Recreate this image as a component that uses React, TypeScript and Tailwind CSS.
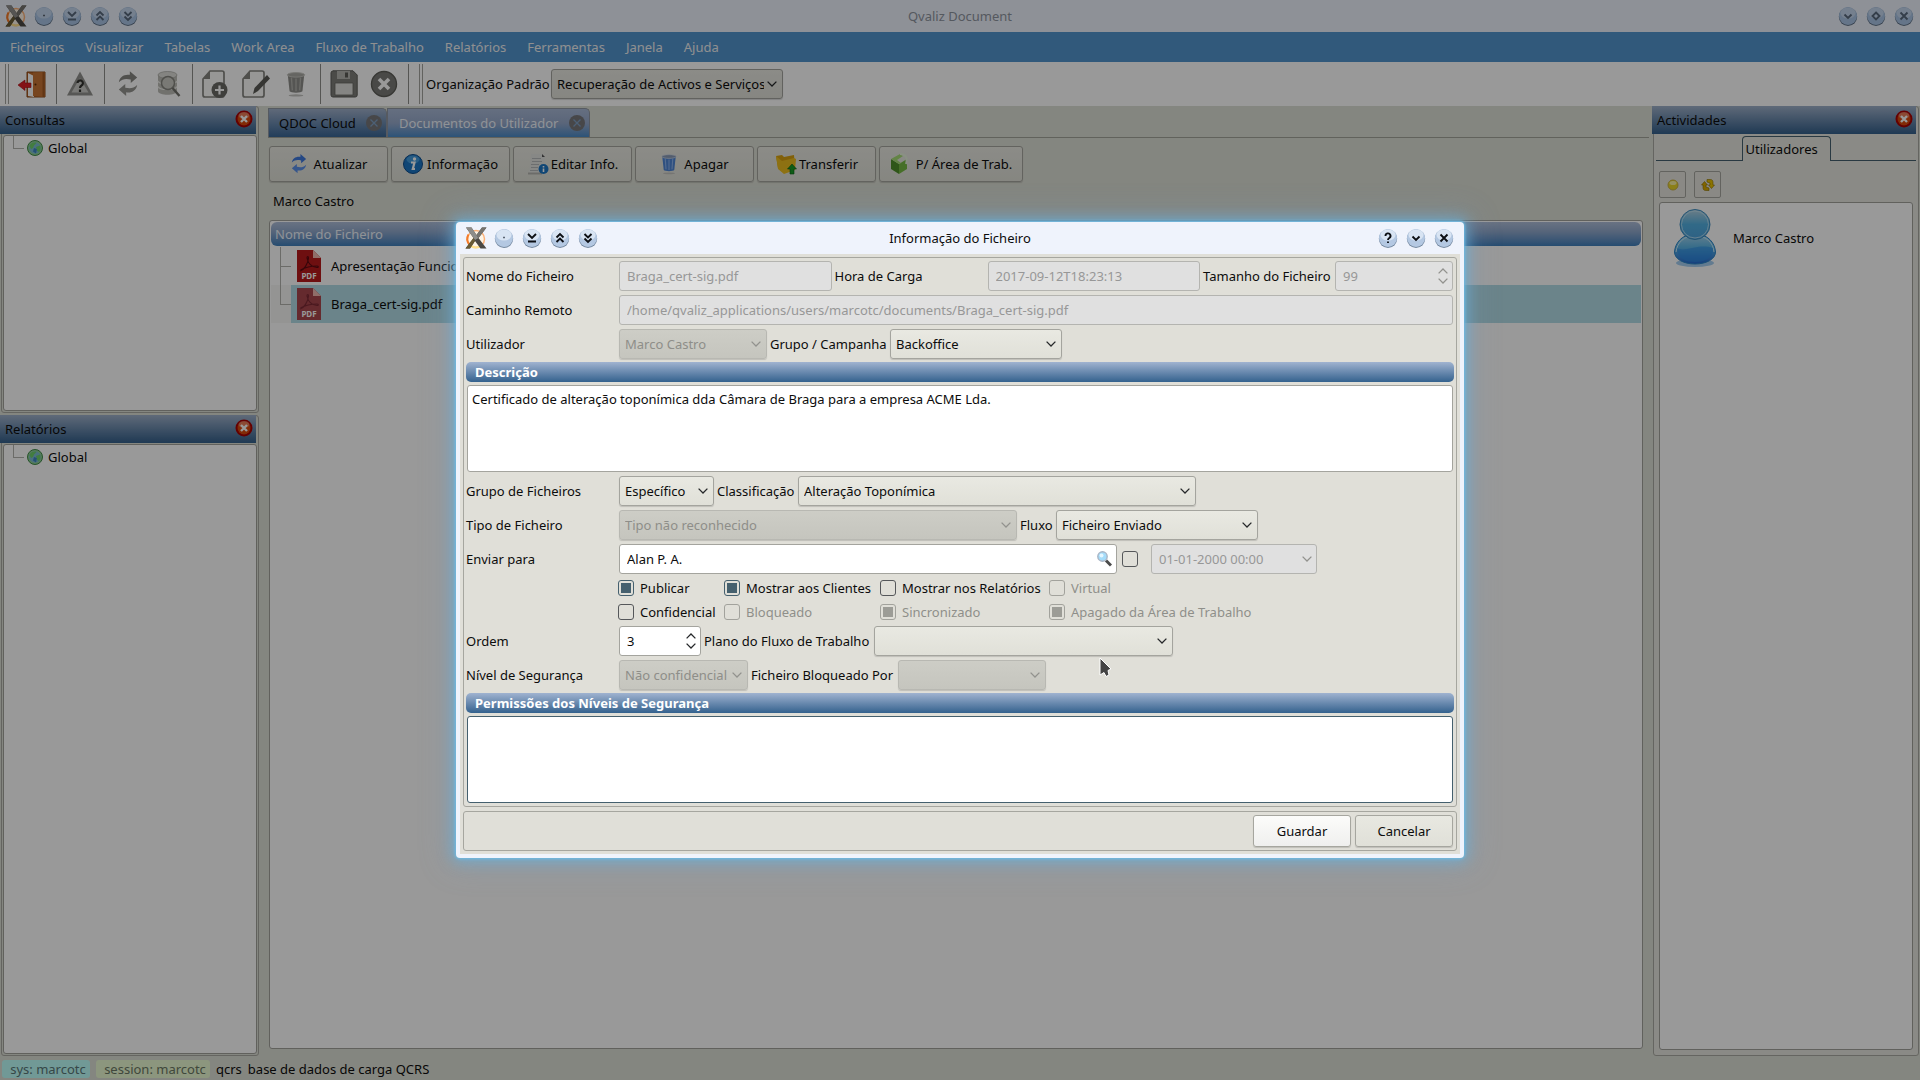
import React from 'react';
import clsx from 'clsx';

type Glyph = 'dot' | 'keepBelow' | 'up' | 'down' | 'minimize' | 'maximize' | 'close' | 'help';

const glyphPaths: Record<Glyph, string> = {
  dot: 'M9.5 9h1v1h-1z',
  keepBelow: 'M6 6l4 4 4-4M6 13.5h8',
  up: 'M6.5 9.5L10 6l3.500 3.500M6.500 14L10 10.500l3.500 3.500',
  down: 'M6.500 6L10 9.500 13.500 6M6.500 10.500L10 14l3.500-3.500',
  minimize: 'M6.500 8.500L10 12l3.500-3.500',
  maximize: 'M10 6.500L13.500 10 10 13.500 6.500 10z',
  close: 'M6.500 6.500l7 7M13.500 6.500l-7 7',
  help: 'M7.500 8a2.500 2.500 0 1 1 3.800 2c-.9.600-1.300.900-1.300 2M10 13.500v1.500',
};

/* Round window button of the title bars */
const WindowButton: React.FC<{ glyph: Glyph; label: string; dim?: boolean }> = ({ glyph, label, dim }) => (
  <button aria-label={label} className="flex size-7 items-center justify-center">
    <svg viewBox="0 0 20 20" className="size-5">
      <circle cx="10" cy="10.800" r="9.200" fill={dim ? '#5f7186' : '#74889f'} />
      <circle cx="10" cy="10" r="9" fill={dim ? '#a9c4e4' : '#b4c8e2'} />
      <ellipse cx="10" cy="7" rx="7.500" ry="5.500" fill="#e4edf8" opacity={dim ? 0.45 : 0.75} />
      <path
        d={glyphPaths[glyph]}
        fill="none"
        stroke={glyph === 'dot' ? '#5b6673' : dim ? '#58687c' : '#0c0f14'}
        strokeWidth={glyph === 'dot' ? 1 : 1.9}
      />
    </svg>
  </button>
);

const AppLogo = () => (
  <svg viewBox="0 0 24 24" className="size-6">
    <circle cx="12" cy="13" r="8.500" fill="#fdf4e6" stroke="#fbb077" strokeWidth="1.500" />
    <path d="M4.500 8.500a8.500 8.500 0 0 0 1 10" fill="none" stroke="#f47b2a" strokeWidth="2" />
    <path d="M5.500 18.500a8.500 8.500 0 0 0 12 1" fill="none" stroke="#ffe08a" strokeWidth="2" />
    <path d="M2 1.500h5.500l5 7.500L18 1.500h4.500L14.500 12l8 10.500h-6L11 15 6 22.500H1.500L9.500 12z" fill="#4b4843" />
    <path d="M2 1.500h5.500l5 7.500 2 3-3.500 2-1.500-2z" fill="#8e8d8a" />
    <path d="M18 1.500h4.500L14.500 12l-2-3z" fill="#77746e" />
    <path d="M9.500 12l-8 10.500H6L11 15z" fill="#6a5b34" />
  </svg>
);

const CloseBadge = () => (
  <svg viewBox="0 0 18 18" className="size-[18px]">
    <circle cx="9" cy="9" r="8.500" fill="#a80000" />
    <circle cx="9" cy="9" r="6.500" fill="#d8480c" />
    <ellipse cx="9" cy="5.500" rx="5.500" ry="3.500" fill="#f4a08c" opacity=".6" />
    <path d="M6 6l6 6M12 6l-6 6" stroke="#fff" strokeWidth="2.400" />
  </svg>
);

const Globe = () => (
  <svg viewBox="0 0 16 16" className="size-4">
    <circle cx="8" cy="8" r="7.500" fill="#8fd092" stroke="#3f8a4a" />
    <circle cx="8" cy="8" r="5.800" fill="#7cbcd2" />
    <path d="M2.500 6C4 2.500 8 2 9.500 3L7 5.500 6 8l-2 1zM9 7l4-1.500c1 2 .5 5-1 6.500l-2-1z" fill="#6ed069" />
    <path d="M7 8l3 1-1 4.500-3-2z" fill="#3f86c4" />
  </svg>
);

const PdfIcon: React.FC<{ selected?: boolean }> = ({ selected }) => (
  <svg viewBox="0 0 24 32" className="h-8 w-6">
    <path d="M0 0h16l8 8v24H0z" fill={selected ? '#a8464e' : '#b81a1c'} />
    <path d="M16 0l8 8h-8z" fill="#f0b8b0" />
    <path
      d="M3 21c4-1 8-7 8.500-13 0-2-1.500-2-1.500 0 1 5 4 9 10 9.500 2 0 1.500-1.500 0-1.500C14 16 8 17.500 3.500 20"
      fill="none"
      stroke={selected ? '#7c2a34' : '#5c0a10'}
      strokeWidth="1.200"
    />
    <text x="12" y="29" textAnchor="middle" fontFamily="Noto Sans, sans-serif" fontSize="8" fontWeight="700" fill="#fff">
      PDF
    </text>
  </svg>
);

const DoorIcon = () => (
  <svg viewBox="0 0 28 28" className="size-7">
    <path d="M9 2h18v25H9z" fill="#c06a28" stroke="#8a4614" />
    <path d="M10 3l6 3v21l-6-1z" fill="#fff" />
    <path d="M15 2.500l11.500-.5v25L15 26z" fill="#c77434" />
    <path d="M24.500 2h2v25h-2z" fill="#a45a22" />
    <circle cx="17.500" cy="14.500" r="1" fill="#5a2c08" />
    <path d="M0 15l7-5v3h6v4.500H7v3z" fill="#dc1f26" stroke="#a50d14" strokeWidth=".6" />
  </svg>
);

const WarningIcon = () => (
  <svg viewBox="0 0 28 28" className="size-7">
    <path d="M14 1.500L27 25.500H1z" fill="#92928e" />
    <path d="M14 8l8.500 14.500h-17z" fill="#cacac6" />
    <path d="M11.500 13a2.700 2.700 0 1 1 4 2.500c-1 .6-1.500 1-1.500 2.500M14 19.500V22" fill="none" stroke="#33332f" strokeWidth="2.200" />
  </svg>
);

const RefreshIcon: React.FC<{ blue?: boolean; className?: string }> = ({ blue, className }) => (
  <svg viewBox="0 0 24 28" className={className}>
    <path d="M2 12C3 6 8 3 14 4V0l8 7-7 6V9C10 8 6 8 2 12z" fill={blue ? '#3f78dc' : '#878783'} />
    <path d="M22 15c-1 6-6 9-12 8v4l-8-7 7-6v4c5 1 9 1 13-3z" fill={blue ? '#5b8fe8' : '#94948f'} />
  </svg>
);

const DatabaseSearchIcon = () => (
  <svg viewBox="0 0 28 28" className="size-7">
    <path d="M4 5v16c0 5 19 5 19 0V5z" fill="#bcbcb6" />
    <ellipse cx="13.500" cy="5" rx="9.500" ry="3.500" fill="#dcdcd7" stroke="#a6a6a0" strokeWidth=".7" />
    <path d="M4 11c1 4 18 4 19 0M4 16.500c1 4 18 4 19 0" fill="none" stroke="#ececE8" strokeWidth="1.200" />
    <circle cx="14" cy="13" r="6.500" fill="#cacac4" stroke="#85857f" strokeWidth="1.500" />
    <path d="M18.500 18l7 8" stroke="#72726c" strokeWidth="2.400" />
  </svg>
);

const NewDocIcon = () => (
  <svg viewBox="0 0 28 28" className="size-7">
    <path d="M8 1h12a2 2 0 0 1 2 2v22a2 2 0 0 1-2 2H3a2 2 0 0 1-2-2V9z" fill="#fcfcfa" stroke="#84847f" strokeWidth="1.700" />
    <path d="M8 1v8H1z" fill="#84847f" />
    <circle cx="17.500" cy="20" r="8" fill="#696965" />
    <path d="M17.500 15.500v9M13 20h9" stroke="#fff" strokeWidth="2.200" />
  </svg>
);

const EditDocIcon = () => (
  <svg viewBox="0 0 28 28" className="size-7">
    <path d="M8 1h12a2 2 0 0 1 2 2v22a2 2 0 0 1-2 2H3a2 2 0 0 1-2-2V9z" fill="#fcfcfa" stroke="#84847f" strokeWidth="1.700" />
    <path d="M8 1v8H1z" fill="#84847f" />
    <path d="M25 5l3 3.500L16 21l-5 3 1.500-6z" fill="#5a5a55" />
  </svg>
);

const TrashIcon: React.FC<{ blue?: boolean; className?: string }> = ({ blue, className }) => (
  <svg viewBox="0 0 24 28" className={className}>
    <ellipse cx="12" cy="26.500" rx="8" ry="1.200" fill="#c4c4c0" />
    <path d="M3 4h18l-2 18c-1 2-13 2-14 0z" fill={blue ? '#4f86d6' : '#8e8e8a'} />
    <path d="M7 7l1 14M12 8v14M17 7l-1 14" stroke={blue ? '#8db4ee' : '#b2b2ad'} strokeWidth="1.500" />
    <ellipse cx="12" cy="4" rx="9.500" ry="2.500" fill={blue ? '#8a9cb8' : '#a9a9a4'} stroke={blue ? '#d0d8e4' : '#c8c8c3'} />
  </svg>
);

const SaveIcon = () => (
  <svg viewBox="0 0 28 28" className="size-7">
    <path d="M3 .8h20L27.200 5v20a2 2 0 0 1-2 2H3a2 2 0 0 1-2-2V3a2 2 0 0 1 2-2z" fill="#7d7d79" stroke="#5d5d58" />
    <path d="M7 1h13v8H7z" fill="#b4b4af" />
    <path d="M15 2.500h3v5h-3z" fill="#5d5d58" />
    <path d="M5 13h18v12H5z" fill="#dededa" stroke="#65655f" strokeWidth=".8" />
  </svg>
);

const CancelIcon = () => (
  <svg viewBox="0 0 28 28" className="size-7">
    <circle cx="14" cy="14" r="12.500" fill="#7b7b77" stroke="#5d5d58" strokeWidth="1.400" />
    <path d="M9 9l10 10M19 9L9 19" stroke="#fff" strokeWidth="3.600" />
  </svg>
);

const InfoIcon: React.FC<{ className?: string }> = ({ className }) => (
  <svg viewBox="0 0 20 20" className={className}>
    <circle cx="10" cy="10" r="9.500" fill="#1c76c4" stroke="#0d4c8c" />
    <ellipse cx="10" cy="5.500" rx="6.500" ry="4" fill="#5fb4ee" opacity=".6" />
    <circle cx="11.500" cy="5" r="1.700" fill="#fff" />
    <path d="M8 8.500h3.500L9.800 15H12" fill="none" stroke="#fff" strokeWidth="2.200" />
  </svg>
);

const EditInfoIcon = () => (
  <svg viewBox="0 0 22 22" className="size-[22px]">
    <path d="M4 1h11l3 3v16H2z" fill="#e2e3df" />
    <path d="M15 1l3 3h-3z" fill="#555" />
    <path d="M5 5.500h9M5 8.500h10M4 11.500h8M4 14.500h7M3 17.500h8" stroke="#b4b8ba" />
    <path d="M1 20.500h14" stroke="#b4b4b0" strokeWidth="2" />
    <circle cx="16.500" cy="16" r="5" fill="#1c76c4" />
    <path d="M16.500 13v1.500M16.500 15.500v3.500" stroke="#fff" strokeWidth="1.600" />
  </svg>
);

const TransferIcon = () => (
  <svg viewBox="0 0 22 22" className="size-[22px]">
    <path d="M1 3l6-1 2 2 10-2 1 14-10 3-7-4z" fill="#d8a010" />
    <path d="M1 3l6 5 12-3 2 1-1 11-11 4-6-5z" fill="#ecbc1e" />
    <path d="M17 11l4.500 5h-2.500v5h-4v-5h-2.500z" fill="#169a24" stroke="#0a5e14" strokeWidth=".6" />
  </svg>
);

const WorkAreaIcon = () => (
  <svg viewBox="0 0 20 22" className="h-[22px] w-5">
    <path d="M1 6l8 5v10l-8-5z" fill="#4f8f2a" />
    <path d="M9 11l8-5v10l-8 5z" fill="#76b944" />
    <path d="M1 6l9-5 3 2-6 4 4 3-2 1z" fill="#a6dc74" />
    <path d="M10 1c5 0 8 3 6 10" fill="none" stroke="#e6f2dc" strokeWidth="2" />
  </svg>
);

const UserIcon = () => (
  <svg viewBox="0 0 44 60" className="h-[60px] w-11">
    <defs>
      <linearGradient id="userBody" x1="0" y1="0" x2="0" y2="1">
        <stop offset="0" stopColor="#a8d6ee" />
        <stop offset=".45" stopColor="#5ab4e6" />
        <stop offset="1" stopColor="#2468d0" />
      </linearGradient>
      <linearGradient id="userHead" x1="0" y1="0" x2="0" y2="1">
        <stop offset="0" stopColor="#b4d2e2" />
        <stop offset=".5" stopColor="#52b0e2" />
        <stop offset="1" stopColor="#4ea2dc" />
      </linearGradient>
    </defs>
    <ellipse cx="22" cy="55" rx="19" ry="4" fill="#a4cdf0" />
    <path d="M1.500 44C2 35 9 26 22 26s20 9 20.500 18c0 7-9 12-20.500 12S1.500 51 1.500 44z" fill="url(#userBody)" stroke="#2c86c8" />
    <path d="M4 40c8 5 20-5 36 0 1 8-6 14-18 14S4 48 4 40z" fill="#2c8ce4" opacity=".55" />
    <path d="M3 44C4 35 11 27.500 22 27.500S40.500 35 41 44" fill="none" stroke="#c8ecfa" />
    <circle cx="22" cy="16.500" r="15" fill="url(#userHead)" stroke="#3c8cc0" />
    <circle cx="22" cy="16.500" r="13.500" fill="none" stroke="#c0e4f4" opacity=".8" />
  </svg>
);

const TabClose = () => (
  <button aria-label="Fechar separador">
    <svg viewBox="0 0 16 16" className="size-4">
      <circle cx="8" cy="8" r="8" fill="#77777a" />
      <path d="M4.500 4.500l7 7M11.500 4.500l-7 7" stroke="#7fa0c4" strokeWidth="1.300" />
    </svg>
  </button>
);

const Chevron: React.FC<{ up?: boolean; muted?: boolean }> = ({ up, muted }) => (
  <svg viewBox="0 0 10 6" className="h-[6px] w-[10px]">
    <path
      d={up ? 'M.6 5.400L5 1l4.400 4.400' : 'M.6.6L5 5 9.400.6'}
      fill="none"
      stroke={muted ? '#92928e' : '#26282a'}
      strokeWidth="1.300"
    />
  </svg>
);

interface SelectProps {
  id: string;
  value: string;
  className: string;
  disabled?: boolean;
}

const Select: React.FC<SelectProps> = ({ id, value, className, disabled }) => (
  <div className={clsx('relative shrink-0', className)}>
    <select
      id={id}
      disabled={disabled}
      className="h-full w-full appearance-none rounded-[3px] border border-[#a4a49e] bg-linear-to-b from-[#e9e9e2] to-[#e0e0d8] pl-[5px] pr-[18px] shadow-[0_1px_1px_rgba(0,0,0,0.15)] disabled:border-[#b8b8b2] disabled:from-[#cdcdc6] disabled:to-[#c5c5be] disabled:text-[#8e8e89] disabled:opacity-100"
    >
      <option>{value}</option>
    </select>
    <span className="pointer-events-none absolute inset-y-0 right-[6px] flex items-center">
      <Chevron muted={disabled} />
    </span>
  </div>
);

interface TextBoxProps {
  id: string;
  value: string;
  className: string;
  label?: string;
  disabled?: boolean;
  type?: string;
  children?: React.ReactNode;
}

const TextBox: React.FC<TextBoxProps> = ({ id, value, className, label, disabled, type = 'text', children }) => (
  <div className={clsx('relative h-[30px]', className)}>
    <input
      id={id}
      type={type}
      aria-label={label}
      defaultValue={value}
      disabled={disabled}
      className="h-full w-full rounded-[3px] border border-[#a4a49e] bg-white px-[7px] disabled:border-[#b4b4b0] disabled:bg-[#e0e0e0] disabled:text-[#979797] [&::-webkit-inner-spin-button]:appearance-none"
    />
    <span className="pointer-events-none absolute inset-y-0 right-[5px] flex flex-col items-center justify-center gap-1">
      {children}
    </span>
  </div>
);

const CheckBox: React.FC<{ label: string; checked?: boolean; disabled?: boolean }> = ({ label, checked, disabled }) => (
  <label className={clsx('flex items-center gap-[6px] whitespace-nowrap', disabled && 'text-[#8f8f8a]')}>
    <input
      type="checkbox"
      defaultChecked={checked}
      disabled={disabled}
      className="size-4 shrink-0 appearance-none rounded-[3px] border border-[#55575a] bg-clip-content p-[2px] checked:border-[#45606e] checked:bg-[#45606e] disabled:border-[#a2a29c] disabled:checked:bg-[#9c9c96]"
    />
    {label}
  </label>
);

const Row: React.FC<{ label: string; htmlFor: string; children: React.ReactNode }> = ({ label, htmlFor, children }) => (
  <div className="mr-px flex h-[30px] items-center">
    <label htmlFor={htmlFor} className="w-[153px] shrink-0">
      {label}
    </label>
    {children}
  </div>
);

const SectionTitle: React.FC<{ children: React.ReactNode }> = ({ children }) => (
  <h2 className="my-[3px] flex h-5 items-center rounded-[5px] bg-linear-to-b from-[#a0b3d0] to-[#34628e] pl-[9px] font-bold text-white">
    {children}
  </h2>
);

interface DockProps {
  title: string;
  className?: string;
  children: React.ReactNode;
}

const Dock: React.FC<DockProps> = ({ title, className, children }) => (
  <section className={clsx('ml-px flex min-h-0 flex-col rounded-[3px] border border-[#a9a9a2] p-px', className)}>
    <div className="-mt-0.5 -ml-[3px] mr-px flex h-7 shrink-0 items-center justify-between bg-linear-to-b from-[#9fb1ca] to-[#34608b] pl-[5px] pr-[3px]">
      <h2>{title}</h2>
      <button aria-label={`Fechar ${title}`} className="pb-[3px]">
        <CloseBadge />
      </button>
    </div>
    {children}
  </section>
);

/* Elbow that joins a tree row to its parent */
const TreeBranch: React.FC<{ last?: boolean }> = ({ last }) => (
  <span className="flex w-5 shrink-0 flex-col self-stretch pl-[9px]">
    <span className="flex-1 border-b border-l border-[#b2b2ae]" />
    <span className={clsx('flex-1', !last && 'border-l border-[#b2b2ae]')} />
  </span>
);

const GlobalTree = () => (
  <div className="mt-px flex-1 rounded-[3px] border border-[#a2a29c] bg-white">
    <div className="flex h-6 items-center">
      <TreeBranch last />
      <span className="ml-[3px] mr-[5px]">
        <Globe />
      </span>
      Global
    </div>
  </div>
);

const menus = ['Ficheiros', 'Visualizar', 'Tabelas', 'Work Area', 'Fluxo de Trabalho', 'Relatórios', 'Ferramentas', 'Janela', 'Ajuda'];

const toolGroups = [
  [{ label: 'Sair', icon: <DoorIcon /> }],
  [{ label: 'Avisos', icon: <WarningIcon /> }],
  [
    { label: 'Atualizar', icon: <RefreshIcon className="h-[28px] w-[22px]" /> },
    { label: 'Pesquisar', icon: <DatabaseSearchIcon /> },
  ],
  [
    { label: 'Novo', icon: <NewDocIcon /> },
    { label: 'Editar', icon: <EditDocIcon /> },
    { label: 'Apagar', icon: <TrashIcon className="h-[28px] w-[22px]" /> },
  ],
  [
    { label: 'Guardar', icon: <SaveIcon /> },
    { label: 'Cancelar', icon: <CancelIcon /> },
  ],
];

const actions = [
  { label: 'Atualizar', icon: <RefreshIcon blue className="h-5 w-[18px]" />, width: 'w-[119px]', gap: 'gap-[6px]' },
  { label: 'Informação', icon: <InfoIcon className="size-5" />, width: 'w-[119px]', gap: 'gap-[4px]' },
  { label: 'Editar Info.', icon: <EditInfoIcon />, width: 'w-[119px]', gap: 'gap-[2px]' },
  { label: 'Apagar', icon: <TrashIcon blue className="h-[22px] w-[18px]" />, width: 'w-[119px]', gap: 'gap-[6px]' },
  { label: 'Transferir', icon: <TransferIcon />, width: 'w-[119px]', gap: 'gap-[2px]' },
  { label: 'P/ Área de Trab.', icon: <WorkAreaIcon />, width: 'w-[144px]', gap: 'gap-[6px]' },
];

const files = [
  { name: 'Apresentação Funcio', selected: false },
  { name: 'Braga_cert-sig.pdf', selected: true },
];

const MainWindow = () => (
  <div className="flex h-full flex-col bg-[#dddfd5]">
    <header className="grid h-8 shrink-0 grid-cols-3 items-center bg-[#edf2fc]">
      <div className="flex items-center pl-1">
        <AppLogo />
        <span className="ml-0.5 flex">
          <WindowButton dim glyph="dot" label="Menu" />
          <WindowButton dim glyph="keepBelow" label="Manter abaixo" />
          <WindowButton dim glyph="up" label="Manter acima" />
          <WindowButton dim glyph="down" label="Enrolar" />
        </span>
      </div>
      <h1 className="text-center text-[#8e949f]">Qvaliz Document</h1>
      <div className="flex justify-end pr-0.5">
        <WindowButton dim glyph="minimize" label="Minimizar" />
        <WindowButton dim glyph="maximize" label="Maximizar" />
        <WindowButton dim glyph="close" label="Fechar" />
      </div>
    </header>

    <nav className="flex h-[30px] shrink-0 items-center gap-px bg-[#5394ce] text-[#eff0f1]">
      {menus.map((menu) => (
        <button key={menu} className="px-[10px]">
          {menu}
        </button>
      ))}
    </nav>

    <div className="flex h-11 shrink-0 items-center bg-white">
      <span className="ml-[5px] mr-[3px] h-10 w-1 border-x border-[#a4a49e]" />
      {toolGroups.map((group, index) => (
        <div key={index} className="flex items-center">
          {group.map((tool) => (
            <button key={tool.label} aria-label={tool.label} className="flex size-10 items-center justify-center">
              {tool.icon}
            </button>
          ))}
          <span className="mx-1 h-10 w-px bg-[#8e8e8a] last:mr-[3px]" />
        </div>
      ))}
      <span className="ml-[7px] mr-[3px] h-10 w-1 border-x border-[#a4a49e]" />
      <label htmlFor="organization" className="w-[125px] shrink-0 whitespace-nowrap">
        Organização Padrão
      </label>
      <Select id="organization" value="Recuperação de Activos e Serviços" className="h-[30px] w-[232px]" />
    </div>

    <div className="flex min-h-0 flex-1 pb-0.5">
      <aside className="flex w-[259px] shrink-0 flex-col gap-0.5">
        <Dock title="Consultas" className="flex-[303]">
          <GlobalTree />
        </Dock>
        <Dock title="Relatórios" className="flex-[637]">
          <GlobalTree />
        </Dock>
      </aside>

      <main className="ml-[9px] flex min-w-0 flex-1 flex-col">
        <div className="flex h-8 shrink-0 items-end border-b border-[#a2a49a]">
          <div className="flex h-[29px] w-[119px] items-center justify-between rounded-tr-[5px] border border-b-0 border-[#8f97a2] bg-linear-to-b from-[#9fb0ca] to-[#3a6796] pl-[10px] pr-1">
            QDOC Cloud
            <TabClose />
          </div>
          <div className="flex h-[29px] w-[203px] items-center justify-between rounded-tr-[5px] border border-b-0 border-[#8f97a2] bg-linear-to-b from-[#a9b9d6] via-[#97aacb] to-[#4a8bc8] pl-[11px] pr-1 text-[#eef3fb]">
            Documentos do Utilizador
            <TabClose />
          </div>
        </div>

        <div className="ml-px mr-[6px] mb-[7px] flex min-h-0 flex-1 flex-col">
          <div className="mt-2 flex gap-[3px]">
            {actions.map((action) => (
              <button
                key={action.label}
                className={clsx(
                  'flex h-9 items-center justify-center whitespace-nowrap rounded-[3px] border border-[#a6a69f] bg-linear-to-b from-[#e9e9e2] to-[#dfe0d7] shadow-[0_1px_1px_rgba(0,0,0,0.15)]',
                  action.width,
                  action.gap,
                )}
              >
                {action.icon}
                {action.label}
              </button>
            ))}
          </div>
          <p className="flex h-[38px] items-center pl-1">Marco Castro</p>

          <div className="flex-1 rounded-[3px] border border-[#a2a29c] bg-white p-px">
            <table className="w-full border-separate border-spacing-0">
              <thead>
                <tr>
                  <th className="p-0 pb-px text-left font-normal">
                    <div className="flex h-6 items-center rounded-[6px] bg-linear-to-b from-[#b0bfda] via-[#90a8cc] via-40% to-[#3f7fbc] pl-1 text-[#eef3fb]">
                      Nome do Ficheiro
                    </div>
                  </th>
                </tr>
              </thead>
              <tbody>
                {files.map((file) => (
                  <tr key={file.name}>
                    <td className={clsx('p-0', file.selected && 'bg-[#f7f7f5]')}>
                      <div className="flex h-[38px] items-center">
                        <TreeBranch last={file.selected} />
                        <div className={clsx('flex h-full flex-1 items-center gap-[10px] pl-[6px]', file.selected && 'bg-[#b2dde6]')}>
                          <PdfIcon selected={file.selected} />
                          {file.name}
                        </div>
                      </div>
                    </td>
                  </tr>
                ))}
              </tbody>
            </table>
          </div>
        </div>
      </main>

      <aside className="ml-[3px] mr-px flex w-[267px] shrink-0 flex-col">
        <Dock title="Actividades" className="flex-1 bg-[#e6e7df]">
          <div className="mx-px mt-0.5 flex h-[25px] shrink-0" role="tablist">
            <span className="flex-1 border-b border-[#45606e]" />
            <button role="tab" className="w-[89px] rounded-t-[4px] border border-b-0 border-[#45606e] pl-[3px] text-left">
              Utilizadores
            </button>
            <span className="flex-1 border-b border-[#45606e]" />
          </div>
          <div className="mt-[10px] ml-1 flex gap-2">
            <button aria-label="Estado" className="flex size-[27px] items-center justify-center rounded-[2px] border border-[#a6a69f] bg-[#e6e4de]">
              <svg viewBox="0 0 12 12" className="size-3">
                <circle cx="6" cy="6" r="5" fill="#e8d428" stroke="#c8b040" />
                <ellipse cx="6" cy="4" rx="3.500" ry="2" fill="#f8f0a0" />
              </svg>
            </button>
            <button aria-label="Atualizar utilizadores" className="flex size-[27px] items-center justify-center rounded-[2px] border border-[#a6a69f] bg-[#e6e4de]">
              <svg viewBox="0 0 14 14" className="size-[14px]">
                <path d="M6 1.500h3.500c1.500 0 2.500 1 2.500 3V7h1.500l-3 3.500L7.500 7H9V5L6 4z" fill="#e8c000" stroke="#8a7000" strokeWidth=".6" />
                <path d="M8 12.500H4.500C3 12.500 2 11.500 2 9.500V7H.5l3-3.500L6.500 7H5v2l3 1z" fill="#d8a800" stroke="#8a7000" strokeWidth=".6" />
              </svg>
            </button>
          </div>
          <ul className="mx-1 mt-1 mb-1 flex-1 rounded-[3px] border border-[#a2a29c] bg-white">
            <li className="flex items-center gap-4 pt-[5px] pl-[13px]">
              <UserIcon />
              Marco Castro
            </li>
          </ul>
        </Dock>
      </aside>
    </div>

    <footer className="flex h-[22px] shrink-0 items-start pl-0.5 pt-0.5">
      <span className="mr-[6px] flex h-[18px] w-[88px] items-center justify-center rounded-[3px] bg-[#bdfffb] pl-1 text-[#5a7878]">sys: marcotc</span>
      <span className="mr-[6px] flex h-[18px] w-[114px] items-center justify-center rounded-[3px] bg-[#e9fbd2] pl-1 text-[#6c7864]">session: marcotc</span>
      <span className="mr-[6px] flex h-[18px] items-center">qcrs</span>
      <span className="flex h-[18px] items-center">base de dados de carga QCRS</span>
    </footer>
  </div>
);

const FileInfoDialog = () => (
  <div
    role="dialog"
    aria-labelledby="dialog-title"
    className="relative w-[1008px] max-w-full rounded-[4px] bg-[#eff3fc] px-1 pb-1 shadow-[0_0_3px_1px_#6cbce6,0_0_14px_4px_rgba(100,180,225,0.6),0_0_30px_6px_rgba(120,160,200,0.35)]"
  >
    <div className="grid h-8 grid-cols-3 items-center">
      <div className="flex items-center pl-1">
        <AppLogo />
        <span className="ml-0.5 flex">
          <WindowButton glyph="dot" label="Menu" />
          <WindowButton glyph="keepBelow" label="Manter abaixo" />
          <WindowButton glyph="up" label="Manter acima" />
          <WindowButton glyph="down" label="Enrolar" />
        </span>
      </div>
      <h2 id="dialog-title" className="text-center">
        Informação do Ficheiro
      </h2>
      <div className="flex justify-end pr-0.5">
        <WindowButton glyph="help" label="Ajuda" />
        <WindowButton glyph="minimize" label="Minimizar" />
        <WindowButton glyph="close" label="Fechar" />
      </div>
    </div>

    <form className="bg-[#e0dfd8] p-[3px]">
      <div className="rounded-[3px] border border-[#a6a69f] px-0.5 py-[3px]">
        <div className="flex flex-col gap-1">
          <Row label="Nome do Ficheiro" htmlFor="file-name">
            <TextBox disabled id="file-name" value="Braga_cert-sig.pdf" className="flex-1" />
            <label htmlFor="upload-time" className="ml-[3px] w-[153px]">
              Hora de Carga
            </label>
            <TextBox disabled id="upload-time" value="2017-09-12T18:23:13" className="flex-1" />
            <label htmlFor="file-size" className="ml-[3px] w-[132px]">
              Tamanho do Ficheiro
            </label>
            <TextBox disabled id="file-size" type="number" value="99" className="w-[118px]">
              <Chevron up muted />
              <Chevron muted />
            </TextBox>
          </Row>
          <Row label="Caminho Remoto" htmlFor="remote-path">
            <TextBox
              disabled
              id="remote-path"
              value="/home/qvaliz_applications/users/marcotc/documents/Braga_cert-sig.pdf"
              className="flex-1"
            />
          </Row>
          <Row label="Utilizador" htmlFor="user">
            <Select disabled id="user" value="Marco Castro" className="h-[30px] w-[148px]" />
            <label htmlFor="campaign" className="ml-[3px] w-[120px]">
              Grupo / Campanha
            </label>
            <Select id="campaign" value="Backoffice" className="h-[30px] w-[172px]" />
          </Row>
        </div>

        <SectionTitle>Descrição</SectionTitle>
        <textarea
          aria-label="Descrição"
          defaultValue="Certificado de alteração toponímica dda Câmara de Braga para a empresa ACME Lda."
          className="mr-px ml-px block h-[87px] w-[calc(100%-2px)] resize-none rounded-[3px] border border-[#a4a49e] bg-white p-1 leading-[18px]"
        />

        <div className="mt-1 flex flex-col gap-1">
          <Row label="Grupo de Ficheiros" htmlFor="file-group">
            <Select id="file-group" value="Específico" className="h-[30px] w-[95px]" />
            <label htmlFor="classification" className="ml-[3px] w-[81px]">
              Classificação
            </label>
            <Select id="classification" value="Alteração Toponímica" className="h-[30px] w-[398px]" />
          </Row>
          <Row label="Tipo de Ficheiro" htmlFor="file-type">
            <Select disabled id="file-type" value="Tipo não reconhecido" className="h-[30px] w-[398px]" />
            <label htmlFor="flow" className="ml-[3px] w-9">
              Fluxo
            </label>
            <Select id="flow" value="Ficheiro Enviado" className="h-[30px] w-[202px]" />
          </Row>
          <Row label="Enviar para" htmlFor="send-to">
            <TextBox id="send-to" value="Alan P. A." className="w-[498px]">
              <svg viewBox="0 0 16 16" className="size-4">
                <path d="M10 9.500l5 5" stroke="#4a4a4a" strokeWidth="3" />
                <circle cx="6.500" cy="5.500" r="4.700" fill="#a4dcfa" stroke="#a8b4c4" strokeWidth="1.400" />
                <circle cx="5.500" cy="4.500" r="2" fill="#e4f6ff" />
              </svg>
            </TextBox>
            <span className="ml-[5px] mr-[13px]">
              <input
                type="checkbox"
                aria-label="Agendar envio"
                className="block size-4 appearance-none rounded-[3px] border border-[#55575a]"
              />
            </span>
            <TextBox disabled id="send-date" label="Data de envio" value="01-01-2000 00:00" className="w-[166px]">
              <Chevron muted />
            </TextBox>
          </Row>
        </div>

        <div className="ml-[152px] grid grid-cols-[106px_156px_169px_1fr] auto-rows-[24px] py-0.5">
          <CheckBox label="Publicar" checked />
          <CheckBox label="Mostrar aos Clientes" checked />
          <CheckBox label="Mostrar nos Relatórios" />
          <CheckBox label="Virtual" disabled />
          <CheckBox label="Confidencial" />
          <CheckBox label="Bloqueado" disabled />
          <CheckBox label="Sincronizado" checked disabled />
          <CheckBox label="Apagado da Área de Trabalho" checked disabled />
        </div>

        <div className="flex flex-col gap-1">
          <Row label="Ordem" htmlFor="order">
            <TextBox id="order" type="number" value="3" className="w-[82px]">
              <Chevron up />
              <Chevron />
            </TextBox>
            <label htmlFor="workflow" className="ml-[3px] w-[170px]">
              Plano do Fluxo de Trabalho
            </label>
            <Select id="workflow" value="" className="h-[30px] w-[299px]" />
          </Row>
          <Row label="Nível de Segurança" htmlFor="security-level">
            <Select disabled id="security-level" value="Não confidencial" className="h-[30px] w-[129px]" />
            <label htmlFor="locked-by" className="ml-[3px] w-[147px]">
              Ficheiro Bloqueado Por
            </label>
            <Select disabled id="locked-by" value="" className="h-[30px] w-[148px]" />
          </Row>
        </div>

        <SectionTitle>Permissões dos Níveis de Segurança</SectionTitle>
        <div className="mx-px h-[87px] rounded-[3px] border border-[#45606e] bg-white" />
      </div>

      <div className="mt-1 flex justify-end gap-1 rounded-[3px] border border-[#a6a69f] p-[3px]">
        <button
          type="button"
          className="h-8 w-[98px] rounded-[3px] border border-[#a6a69f] bg-linear-to-b from-[#fcfcfa] to-[#efefee] shadow-[0_1px_1px_rgba(0,0,0,0.15)]"
        >
          Guardar
        </button>
        <button
          type="button"
          className="h-8 w-[98px] rounded-[3px] border border-[#a6a69f] bg-linear-to-b from-[#e8e8e1] to-[#e0e0d8] shadow-[0_1px_1px_rgba(0,0,0,0.15)]"
        >
          Cancelar
        </button>
      </div>
    </form>

    {/* Mouse pointer */}
    <svg viewBox="0 0 13 21" className="pointer-events-none absolute top-[435px] left-[643px] h-[21px] w-[13px]">
      <path d="M1 1l11 11-3 1.500L10 18l-3 1.500-2-4L1 18z" fill="#444" stroke="#fff" strokeWidth="1" />
    </svg>
  </div>
);

export default function App() {
  return (
    <div className="relative h-screen overflow-hidden font-['Noto_Sans',sans-serif] text-[13px] leading-[18px] text-[#0c0c0c]">
      <MainWindow />
      <div className="absolute inset-0 flex items-center justify-center bg-black/40">
        <FileInfoDialog />
      </div>
    </div>
  );
}
